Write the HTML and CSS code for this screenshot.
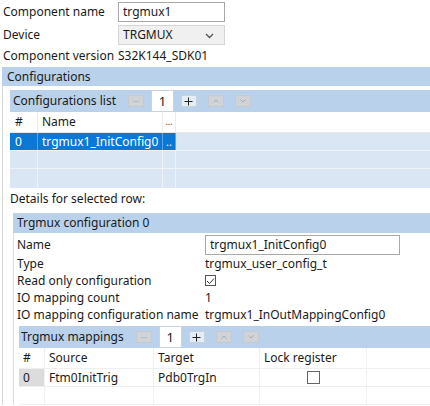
FILE: index.html
```html
<!DOCTYPE html>
<html>
<head>
<meta charset="utf-8">
<link rel="stylesheet" href="styles.css">
</head>
<body>
<div class="top">
  <div class="frow">
    <span class="flabel">Component name</span>
    <span class="tinput w106">trgmux1</span>
  </div>
  <div class="frow">
    <span class="flabel">Device</span>
    <span class="tselect">TRGMUX
      <svg class="chev" width="9" height="6" viewBox="0 0 9 6"><path d="M1 1 L4.5 4.5 L8 1" fill="none" stroke="#555" stroke-width="1.3"/></svg>
    </span>
  </div>
  <div class="frow short">
    <span class="flabel">Component version</span>
    <span class="val">S32K144_SDK01</span>
  </div>
</div>

<div class="band sec1">Configurations</div>
<div class="sec1body">
  <div class="band listbar">
    <span class="bt">Configurations list</span>
    <span class="btn dis b1"><svg width="8" height="8" viewBox="0 0 8 8"><path d="M1 4.5H7" stroke="#bbb" stroke-width="1"/></svg></span>
    <span class="numbox">1</span>
    <span class="btn en"><svg width="9" height="9" viewBox="0 0 9 9"><path d="M0.5 4.5H8.5M4.5 0.5V8.5" stroke="#222" stroke-width="1"/></svg></span>
    <span class="btn dis"><svg width="8" height="6" viewBox="0 0 8 6"><path d="M1.5 4.5L4 2L6.5 4.5" fill="none" stroke="#aaa" stroke-width="1"/></svg></span>
    <span class="btn dis"><svg width="8" height="6" viewBox="0 0 8 6"><path d="M1.5 1.5L4 4L6.5 1.5" fill="none" stroke="#aaa" stroke-width="1"/></svg></span>
  </div>
  <div class="ctable">
    <div class="crow head">
      <span class="c-num">#</span><span class="c-name">Name</span><span class="c-dots">...</span><span class="c-rest"></span>
    </div>
    <div class="crow sel">
      <span class="c-num">0</span><span class="c-name">trgmux1_InitConfig0</span><span class="c-dots">..</span><span class="c-rest"></span>
    </div>
    <div class="crow empty">
      <span class="c-num"></span><span class="c-name"></span><span class="c-dots"></span><span class="c-rest"></span>
    </div>
    <div class="crow empty tall">
      <span class="c-num"></span><span class="c-name"></span><span class="c-dots"></span><span class="c-rest"></span>
    </div>
  </div>

  <div class="dlabel">Details for selected row:</div>

  <div class="band sec2">Trgmux configuration 0</div>
  <div class="sec2body">
    <div class="drow first">
      <span class="dl">Name</span>
      <span class="tinput w195">trgmux1_InitConfig0</span>
    </div>
    <div class="drow">
      <span class="dl">Type</span>
      <span class="dv">trgmux_user_config_t</span>
    </div>
    <div class="drow">
      <span class="dl">Read only configuration</span>
      <span class="dv"><span class="cbox"><svg width="9" height="8" viewBox="0 0 9 8"><path d="M1 4L3.5 6.5L8 1.5" fill="none" stroke="#333" stroke-width="1"/></svg></span></span>
    </div>
    <div class="drow">
      <span class="dl">IO mapping count</span>
      <span class="dv">1</span>
    </div>
    <div class="drow">
      <span class="dl">IO mapping configuration name</span>
      <span class="dv">trgmux1_InOutMappingConfig0</span>
    </div>

    <div class="band mapbar">
      <span class="bt">Trgmux mappings</span>
      <span class="btn dis b2"><svg width="8" height="8" viewBox="0 0 8 8"><path d="M1 4.5H7" stroke="#bbb" stroke-width="1"/></svg></span>
      <span class="numbox">1</span>
      <span class="btn en"><svg width="9" height="9" viewBox="0 0 9 9"><path d="M0.5 4.5H8.5M4.5 0.5V8.5" stroke="#222" stroke-width="1"/></svg></span>
      <span class="btn dis"><svg width="8" height="6" viewBox="0 0 8 6"><path d="M1.5 4.5L4 2L6.5 4.5" fill="none" stroke="#aaa" stroke-width="1"/></svg></span>
      <span class="btn dis"><svg width="8" height="6" viewBox="0 0 8 6"><path d="M1.5 1.5L4 4L6.5 1.5" fill="none" stroke="#aaa" stroke-width="1"/></svg></span>
    </div>
    <div class="mtable">
      <div class="mrow head">
        <span class="m-num">#</span><span class="m-src">Source</span><span class="m-tgt">Target</span><span class="m-lock">Lock register</span><span class="m-rest"></span>
      </div>
      <div class="mrow">
        <span class="m-num gray">0</span><span class="m-src">Ftm0InitTrig</span><span class="m-tgt">Pdb0TrgIn</span><span class="m-lock center"><span class="cbox big"></span></span><span class="m-rest"></span>
      </div>
      <div class="mrow">
        <span class="m-num"></span><span class="m-src"></span><span class="m-tgt"></span><span class="m-lock"></span><span class="m-rest"></span>
      </div>
    </div>
  </div>
</div>
</body>
</html>
```

FILE: styles.css
```css
html, body {
  margin: 0;
  padding: 0;
  background: #ffffff;
  overflow: hidden;
}
body {
  font-family: "Noto Sans", "Open Sans", sans-serif;
  font-size: 12px;
  line-height: 16px;
  color: #1a1a1a;
  width: 430px;
  height: 406px;
  white-space: nowrap;
}
.top {
  padding: 2px 0 0 3px;
}
.frow {
  display: flex;
  align-items: center;
  height: 20px;
  margin-bottom: 3px;
}
.frow.short {
  height: 17px;
  margin-bottom: 3px;
  margin-top: -1px;
}
.flabel {
  width: 115px;
  flex: none;
}
.tinput {
  box-sizing: border-box;
  height: 20px;
  border: 1px solid #a9a9a9;
  background: #fff;
  display: flex;
  align-items: center;
  padding-left: 4px;
}
.w106 { width: 107px; }
.w195 { width: 195px; }
.tselect {
  box-sizing: border-box;
  width: 107px;
  height: 20px;
  border: 1px solid #d6d6d6;
  background: #f0f0f0;
  display: flex;
  align-items: center;
  padding-left: 4px;
  position: relative;
}
.chev {
  position: absolute;
  right: 10px;
  top: 7px;
}
.band {
  background: #b9d1ea;
  display: flex;
  align-items: center;
}
.sec1 {
  margin-left: 2px;
  height: 19px;
  padding-left: 5px;
}
.sec1body {
  margin-left: 2px;
  border-left: 1px solid #d6d6d6;
  padding-left: 7px;
  padding-top: 4px;
}
.listbar {
  height: 22px;
  padding-left: 3px;
}
.bt { flex: none; }
.btn {
  box-sizing: border-box;
  width: 16px;
  height: 12px;
  display: flex;
  align-items: center;
  justify-content: center;
  margin-right: 11px;
  flex: none;
}
.btn.dis {
  background: #cfd3d8;
  border: 1px solid #c5cad0;
}
.btn.en {
  background: #e4ecf5;
  border: 1px solid #c7d3df;
}
.b1 { margin-left: 12px; }
.b2 { margin-left: 12px; }
.numbox {
  box-sizing: border-box;
  width: 23px;
  height: 22px;
  background: #fff;
  border: 1px solid #c8d3de;
  display: flex;
  align-items: center;
  justify-content: center;
  margin-left: -4px;
  margin-right: 7px;
  flex: none;
  font-size: 13px;
}
.ctable {
  background: #dae6f3;
}
.crow {
  display: flex;
  height: 17px;
  border-bottom: 1px solid #eef3f9;
}
.crow > span {
  display: flex;
  align-items: center;
  box-sizing: border-box;
  border-right: 1px solid #eef3f9;
  overflow: hidden;
}
.crow.head {
  height: 20px;
  background: #fff;
  border-bottom: 1px solid #e8e8e8;
}
.crow.head > span { border-right: 1px solid #ececec; }
.crow.tall { height: 19px; border-bottom: none; }
.c-num { width: 28px; padding-left: 5px; }
.c-name { width: 125px; padding-left: 4px; }
.c-dots { width: 13px; justify-content: center; font-size: 11px; color: #444; }
.crow.head .c-dots { font-size: 9px; }
.c-rest { flex: 1; border-right: none !important; }
.crow.sel .c-num,
.crow.sel .c-name,
.crow.sel .c-dots {
  background: #0a78d7;
  color: #fff;
  border-right-color: #5aa4e4;
}
.dlabel {
  height: 19px;
  display: flex;
  align-items: flex-end;
  margin-bottom: 6px;
}
.sec2 {
  margin-left: 3px;
  height: 20px;
  padding-left: 4px;
}
.sec2body {
  margin-left: 3px;
  border-left: 1px solid #dcdcdc;
  padding-left: 3px;
  padding-top: 2px;
}
.drow {
  display: flex;
  align-items: center;
  height: 17px;
}
.drow.first { height: 20px; margin-bottom: 0; }
.dl { width: 188px; flex: none; }
.dv { display: flex; align-items: center; }
.cbox {
  box-sizing: border-box;
  width: 11px;
  height: 11px;
  border: 1px solid #555;
  background: #fff;
  display: inline-flex;
  align-items: center;
  justify-content: center;
}
.cbox.big { width: 13px; height: 13px; border-color: #666; }
.mapbar {
  margin-top: 3px;
  margin-left: 2px;
  height: 22px;
  padding-left: 2px;
}
.mtable {
  margin-left: 2px;
}
.mrow {
  display: flex;
  height: 17px;
  border-bottom: 1px solid #efefef;
}
.mrow.head { height: 20px; }
.mrow > span {
  box-sizing: border-box;
  display: flex;
  align-items: center;
  border-right: 1px solid #efefef;
  padding-left: 4px;
}
.m-num { width: 26px; }
.m-num.gray { background: #dcdcdc; }
.m-src { width: 109px; }
.m-tgt { width: 106px; }
.m-lock { width: 107px; }
.m-lock.center { justify-content: center; padding-left: 0; }
.m-rest { flex: 1; border-right: none !important; }
```
